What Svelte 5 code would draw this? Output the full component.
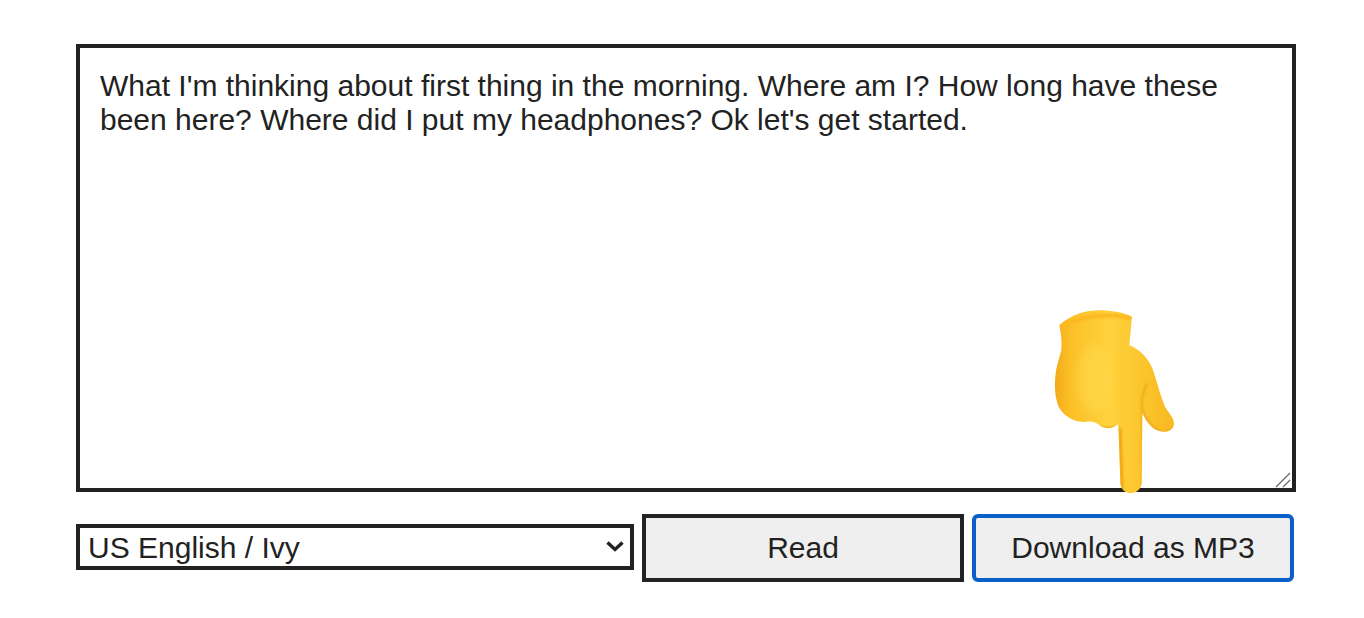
<script>
  let text = $state("What I'm thinking about first thing in the morning. Where am I? How long have these been here? Where did I put my headphones? Ok let's get started.");
  let voice = $state("ivy");
  const voices = [
    { id: "ivy", label: "US English / Ivy" },
    { id: "joanna", label: "US English / Joanna" },
    { id: "matthew", label: "US English / Matthew" },
  ];
  const outline = "M88 76C125 42 170 31 205 31C245 31 282 38 306 50L298 135C325 148 352 168 367 205C380 240 390 285 405 320C417 340 433 355 432 372C431 390 411 398 393 394C366 388 347 365 337 335L335 545C335 568 318 579 302 579C285 579 272 566 271 548L265 372C250 385 232 388 215 380C200 368 185 362 165 366C135 366 108 352 92 330C78 310 72 270 76 230C79 195 90 170 94 150C96 125 93 100 88 76Z";
</script>

<div class="page">
  <div class="reader">
    <div class="field">
      <textarea class="input" bind:value={text}></textarea>
      <svg class="grip" viewBox="0 0 16 16" aria-hidden="true">
        <path d="M1 15L15 1M8 15L15 8" fill="none" stroke="#666" stroke-width="1.2" />
      </svg>
    </div>

    <div class="controls">
      <div class="voice">
        <select bind:value={voice}>
          {#each voices as v}
            <option value={v.id}>{v.label}</option>
          {/each}
        </select>
        <svg class="chevron" viewBox="0 0 18 11" aria-hidden="true">
          <path d="M1.5 1.5L9 8.5L16.5 1.5" fill="none" stroke="#222" stroke-width="3.4" />
        </svg>
      </div>
      <button class="btn">Read</button>
      <button class="btn primary">Download as MP3</button>
    </div>

    <svg class="hand" viewBox="0 0 510 600" aria-hidden="true">
      <defs>
        <linearGradient id="skin" x1="0" y1="0" x2="1" y2="0">
          <stop offset="0" stop-color="#f3a91a" />
          <stop offset="0.12" stop-color="#fbbf27" />
          <stop offset="0.45" stop-color="#ffd23c" />
          <stop offset="0.72" stop-color="#fcc62e" />
          <stop offset="1" stop-color="#f8b822" />
        </linearGradient>
        <clipPath id="shape"><path d={outline} /></clipPath>
        <filter id="edge" filterUnits="userSpaceOnUse" x="0" y="0" width="510" height="600"><feGaussianBlur stdDeviation="1.2" /></filter>
        <filter id="shade" filterUnits="userSpaceOnUse" x="0" y="0" width="510" height="600"><feGaussianBlur stdDeviation="12" /></filter>
        <filter id="line" filterUnits="userSpaceOnUse" x="0" y="0" width="510" height="600"><feGaussianBlur stdDeviation="3" /></filter>
      </defs>
      <path d={outline} fill="url(#skin)" filter="url(#edge)" />
      <g clip-path="url(#shape)">
        <!-- palm underside -->
        <path d="M70 325C110 365 150 372 170 372C195 372 220 392 265 376L265 395L70 395Z" fill="#ee9f14" filter="url(#line)" />
        <!-- finger sides -->
        <path d="M270 385L276 580" stroke="#f0a416" stroke-width="10" fill="none" filter="url(#line)" />
        <path d="M336 340L336 580" stroke="#f5b01c" stroke-width="7" fill="none" filter="url(#line)" />
        <!-- fist highlight -->
        <ellipse cx="195" cy="235" rx="55" ry="105" fill="#ffd94e" opacity="0.55" filter="url(#shade)" />
        <!-- cuff edge -->
        <path d="M88 76C150 38 250 32 306 50L302 60C250 46 150 50 92 88Z" fill="#fbb924" filter="url(#line)" />
        <!-- side finger crease -->
        <path d="M337 335C332 305 338 275 352 250" fill="none" stroke="#eca01a" stroke-width="5" filter="url(#line)" />
        <path d="M337 335C352 370 377 392 402 398L432 388" fill="none" stroke="#eea418" stroke-width="7" filter="url(#line)" />
      </g>
    </svg>
  </div>
</div>

<style>
  :global(body) {
    background: #fff;
  }

  .page {
    padding: 44px 76px;
    font-family: "Liberation Sans", Arial, sans-serif;
    color: #222;
  }

  .reader {
    position: relative;
    width: 1220px;
  }

  .field {
    position: relative;
  }

  .input {
    display: block;
    box-sizing: border-box;
    width: 1220px;
    height: 448px;
    margin: 0;
    padding: 21px 20px 19px;
    border: 4px solid #222;
    border-radius: 0;
    outline: none;
    background: #fff;
    color: #222;
    font-family: inherit;
    font-size: 30px;
    line-height: 34px;
    resize: none;
  }

  .grip {
    position: absolute;
    right: 5px;
    bottom: 4px;
    width: 16px;
    height: 16px;
    pointer-events: none;
  }

  .controls {
    display: flex;
    align-items: flex-start;
    gap: 8px;
    margin-top: 22px;
  }

  .voice {
    position: relative;
    flex: none;
    width: 558px;
    height: 46px;
    margin-top: 10px;
  }

  select {
    appearance: none;
    display: block;
    box-sizing: border-box;
    width: 100%;
    height: 100%;
    margin: 0;
    padding: 0 8px;
    border: 4px solid #222;
    border-radius: 0;
    outline: none;
    background: #fff;
    color: #222;
    font-family: inherit;
    font-size: 30px;
  }

  .chevron {
    position: absolute;
    top: 17px;
    right: 10px;
    width: 18px;
    height: 11px;
    pointer-events: none;
  }

  .btn {
    flex: none;
    box-sizing: border-box;
    width: 322px;
    height: 68px;
    margin: 0;
    border: 4px solid #222;
    border-radius: 0;
    background: #efefef;
    color: #222;
    font-family: inherit;
    font-size: 30px;
    cursor: pointer;
  }

  .btn.primary {
    border-color: #0a5fc8;
    border-radius: 6px;
  }

  .hand {
    position: absolute;
    left: 954px;
    top: 256px;
    width: 170px;
    height: 200px;
    pointer-events: none;
  }
</style>
